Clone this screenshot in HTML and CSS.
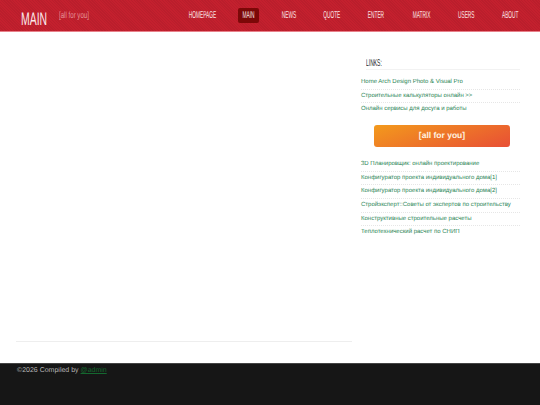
FILE: index.html
```html
<!DOCTYPE html>
<html lang="en">
<head>
<meta charset="utf-8">
<title>MAIN</title>
<link rel="stylesheet" href="styles.css">
</head>
<body>
<header class="header">
  <div class="brand">
    <a class="logo" href="#"><span>MAIN</span></a>
    <span class="tagline"><span>[all for you]</span></span>
  </div>
  <nav class="nav">
    <a href="#" class="w27"><span>HOMEPAGE</span></a>
    <a href="#" class="w11 active"><span>MAIN</span></a>
    <a href="#" class="w15"><span>NEWS</span></a>
    <a href="#" class="w17"><span>QUOTE</span></a>
    <a href="#" class="w16"><span>ENTER</span></a>
    <a href="#" class="w20"><span>MATRIX</span></a>
    <a href="#" class="w16"><span>USERS</span></a>
    <a href="#" class="w17"><span>ABOUT</span></a>
  </nav>
</header>
<div class="page">
  <main class="content"><div class="content-inner"></div></main>
  <aside class="sidebar">
    <h3 class="side-title"><span>LINKS:</span></h3>
    <ul class="links">
      <li><a href="#">Home Arch Design Photo &amp; Visual Pro</a></li>
      <li><a href="#">Строительные калькуляторы онлайн &gt;&gt;</a></li>
      <li><a href="#">Онлайн сервисы для досуга и работы</a></li>
    </ul>
    <a class="cta" href="#">[all for you]</a>
    <ul class="links">
      <li><a href="#">3D Планировщик: онлайн проектирование</a></li>
      <li><a href="#">Конфигуратор проекта индивидуального дома[1]</a></li>
      <li><a href="#">Конфигуратор проекта индивидуального дома[2]</a></li>
      <li><a href="#">Стройэксперт::Советы от экспертов по строительству</a></li>
      <li><a href="#">Конструктивные строительные расчеты</a></li>
      <li><a href="#">Теплотехнический расчет по СНИП</a></li>
    </ul>
  </aside>
</div>
<footer class="footer">©2026 Compiled by <a href="#">@admin</a></footer>
</body>
</html>
```
FILE: styles.css
```css
* { box-sizing: border-box; }
html, body { margin: 0; height: 100%; }
body {
  width: 540px;
  height: 405px;
  overflow: hidden;
  background: #fff;
  font-family: "Liberation Sans", Arial, sans-serif;
  text-rendering: geometricPrecision;
  display: flex;
  flex-direction: column;
}
a { text-decoration: none; }
.header {
  height: 32px;
  flex: none;
  display: flex;
  justify-content: space-between;
  background-color: #c4202e;
  background-image: repeating-linear-gradient(45deg, rgba(0,0,0,.05) 0 1px, transparent 1px 2px);
  border-bottom: 1px solid #e8808a;
  padding-left: 21px;
  padding-right: 21px;
}
.brand { display: flex; align-items: flex-start; }
.logo { display: flex; justify-content: flex-start; color: #fbe9ea; font-size: 18px; line-height: 20px; margin-top: 9px; width: 38px; }
.logo span { flex: none; transform: scaleX(.58); transform-origin: left center; }
.tagline { display: flex; color: #e5929a; font-size: 9px; line-height: 12px; margin-top: 9px; width: 31px; }
.tagline span { flex: none; white-space: nowrap; transform: scaleX(.68); transform-origin: left center; }
.nav { display: flex; align-items: center; gap: 27.35px; height: 31px; }
.nav a { display: flex; justify-content: center; color: #fbe6e7; font-size: 10px; line-height: 10px; position: relative; }
.nav a span { flex: none; transform: scaleX(.48); }
.nav a.active { background: #7c0808; border-radius: 2px; padding: 2.5px 5px; margin: 0 -5px; box-sizing: content-box; }
.w11 { width: 11px; }
.w15 { width: 15px; }
.w16 { width: 16px; }
.w17 { width: 17px; }
.w20 { width: 20px; }
.w27 { width: 27px; }
.page { flex: 1; display: flex; padding: 0 20px 0 16px; gap: 9px; min-height: 0; }
.content { width: 336px; flex: none; }
.content-inner { height: 310px; border-bottom: 1px solid #eee; }
.sidebar { flex: 1; min-width: 0; padding-top: 25px; }
.side-title {
  margin: 0 0 0 5px;
  height: 13px;
  font-weight: normal;
  font-size: 10px;
  line-height: 13px;
  color: #222;
  border-bottom: 1px solid #f2f2f2;
}
.side-title span { display: inline-block; transform: scaleX(.5); transform-origin: left center; }
.links { list-style: none; margin: 0; padding: 0; }
.side-title + .links { margin-top: 6px; }
.links li { height: 13.6px; border-bottom: 1px dotted #e6e6e6; font-size: 6px; line-height: 13px; white-space: nowrap; }
.links li:last-child { border-bottom: 0; }
.links a { color: #2a8555; }
.cta {
  display: block;
  width: 136px;
  height: 22px;
  margin: 8px 0 11.5px 13px;
  background: linear-gradient(160deg, #f39a1c, #e84f35);
  border-radius: 3px;
  color: #fff3e0;
  font-weight: bold;
  font-size: 8.5px;
  line-height: 21px;
  text-align: center;
}
.footer {
  height: 42px;
  flex: none;
  background: #161616;
  border-top: 1px solid #444;
  color: #b5b5b5;
  font-size: 7px;
  line-height: 12px;
  padding: 1px 0 0 17px;
}
.footer a { color: #14682f; text-decoration: underline; }
```
